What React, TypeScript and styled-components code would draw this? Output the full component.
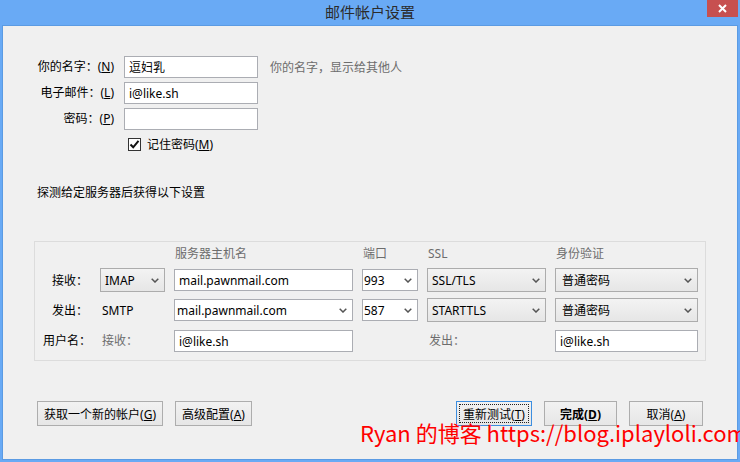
import React from 'react';
import styled, { createGlobalStyle } from 'styled-components';

const Global = createGlobalStyle`
  html, body { margin: 0; padding: 0; }
  body {
    width: 740px; height: 462px; overflow: hidden;
    font-family: "Noto Sans", "Noto Sans CJK SC", sans-serif;
    font-size: 12px; color: #000;
  }
`;

const Window = styled.div`
  width: 740px; height: 462px; box-sizing: border-box;
  background: #69aaf5;
  padding: 0 2px 2px 2px;
  display: flex; flex-direction: column;
  position: relative; overflow: hidden;
`;

const TitleBar = styled.div`
  height: 25px; flex: none;
  display: grid; grid-template-columns: 1fr auto 1fr; align-items: start;
`;

const Title = styled.div`
  grid-column: 2;
  font-family: "Noto Sans CJK SC", sans-serif;
  font-size: 15px; line-height: 24px; color: #2b2b2b;
`;

const CloseBtn = styled.div`
  grid-column: 3; justify-self: end;
  width: 31px; height: 17px; background: #c75050;
  display: flex; align-items: center; justify-content: center;
`;

const Content = styled.div`
  flex: 1; background: #f0f0f0; border: 1px solid #5b9be3;
  display: flex; flex-direction: column;
`;

const Form = styled.div`
  margin: 30px 0 0 27px;
  display: grid;
  grid-template-columns: 84px 134px auto;
  grid-template-rows: 22px 22px 22px 20px;
  row-gap: 4px; column-gap: 10px;
  align-items: center;
`;

const Label = styled.div`
  text-align: right; white-space: nowrap; line-height: 22px;
`;

const Hint = styled.div`
  color: #6d6d6d; margin-left: 2px; white-space: nowrap;
`;

const TextBox = styled.input`
  height: 22px; box-sizing: border-box; width: 100%; min-width: 0;
  border: 1px solid #abadb3; background: #fff;
  padding: 0 4px; margin: 0;
  font: inherit; color: #000; outline: none;
`;

const CheckRow = styled.label`
  grid-column: 2 / 4;
  display: flex; align-items: center; gap: 6px; padding-left: 4px;
  white-space: nowrap;
`;

const CheckBox = styled.span`
  width: 13px; height: 13px; box-sizing: border-box;
  border: 1px solid #333; background: #fff;
  display: flex; align-items: center; justify-content: center;
`;

const Probe = styled.div`
  margin: 31px 0 0 34px; line-height: 16px;
`;

const Group = styled.div`
  margin: 40px 31px 0 31px; height: 120px; box-sizing: border-box;
  border: 1px solid #dcdcdc;
  padding: 4px 7px 0 8px;
  display: grid;
  grid-template-columns: 48px 65px 179px 56px 119px 143px;
  grid-template-rows: 16px 24px 24px 24px;
  column-gap: 9px; row-gap: 6px;
  align-items: center;
`;

const Head = styled.div`
  color: #6d6d6d; line-height: 16px; white-space: nowrap;
  padding-left: 1px;
`;

const RowLabel = styled.div`
  text-align: right; white-space: nowrap; padding-right: 3px;
`;

const Plain = styled.div<{ $muted?: boolean }>`
  color: ${p => (p.$muted ? '#6d6d6d' : '#000')};
  padding-left: 2px; white-space: nowrap;
`;

const Drop = styled.div<{ $field?: boolean; $pad?: number }>`
  height: ${p => (p.$field ? 22 : 24)}px; box-sizing: border-box;
  border: 1px solid ${p => (p.$field ? '#abadb3' : '#acacac')};
  background: ${p => (p.$field ? '#fff' : 'linear-gradient(#f3f3f3, #e6e6e6)')};
  display: flex; align-items: center; justify-content: space-between;
  padding: 0 5px 0 ${p => p.$pad ?? 4}px;
  white-space: nowrap;
`;

const EndBox = styled(TextBox)`
  align-self: end;
`;

const Buttons = styled.div`
  margin: 40px 34px 0 34px;
  display: flex; align-items: center; justify-content: space-between;
`;

const BtnGroup = styled.div`
  display: flex; gap: 12px;
`;

const Btn = styled.button<{ $w: number; $bold?: boolean; $focus?: boolean }>`
  width: ${p => p.$w}px; height: 25px; box-sizing: border-box; margin: 0; padding: 0;
  border: 1px solid ${p => (p.$focus ? '#3c8ee0' : '#adadad')};
  background: linear-gradient(#f2f2f2, #e6e6e6);
  font: inherit; font-weight: ${p => (p.$bold ? 700 : 400)}; color: #000;
  position: relative; white-space: nowrap;
  &::after {
    content: '';
    display: ${p => (p.$focus ? 'block' : 'none')};
    position: absolute; inset: 2px;
    border: 1px dotted #222;
  }
`;

const Watermark = styled.div`
  position: absolute; left: 360px; top: 421px;
  font-family: "Noto Sans CJK SC", sans-serif;
  font-size: 22px; line-height: 22px; color: #ff0000;
  white-space: nowrap; pointer-events: none;
`;

const Arrow = () => (
  <svg width="8" height="5" viewBox="0 0 8 5">
    <path d="M0.7 0.7 L4 4 L7.3 0.7" stroke="#555" strokeWidth="1.5" fill="none" />
  </svg>
);

const Check = () => (
  <svg width="11" height="11" viewBox="0 0 11 11">
    <path d="M1.5 5.5 L4.2 8.3 L9.5 1.8" stroke="#111" strokeWidth="2" fill="none" />
  </svg>
);

export default function App() {
  return (
    <>
      <Global />
      <Window>
        <TitleBar>
          <Title>邮件帐户设置</Title>
          <CloseBtn>
            <svg width="9" height="9" viewBox="0 0 9 9">
              <path d="M1 1 L8 8 M8 1 L1 8" stroke="#fff" strokeWidth="2" />
            </svg>
          </CloseBtn>
        </TitleBar>
        <Content>
          <Form>
            <Label>你的名字：(<u>N</u>)</Label>
            <TextBox defaultValue="逗妇乳" />
            <Hint>你的名字，显示给其他人</Hint>
            <Label>电子邮件：(<u>L</u>)</Label>
            <TextBox defaultValue="i@like.sh" />
            <span />
            <Label>密码：(<u>P</u>)</Label>
            <TextBox type="password" defaultValue="" />
            <span />
            <span />
            <CheckRow>
              <CheckBox><Check /></CheckBox>
              <span>记住密码(<u>M</u>)</span>
            </CheckRow>
          </Form>

          <Probe>探测给定服务器后获得以下设置</Probe>

          <Group>
            <span />
            <span />
            <Head>服务器主机名</Head>
            <Head>端口</Head>
            <Head>SSL</Head>
            <Head>身份验证</Head>

            <RowLabel>接收：</RowLabel>
            <Drop>IMAP<Arrow /></Drop>
            <TextBox defaultValue="mail.pawnmail.com" />
            <Drop $field $pad={1}>993<Arrow /></Drop>
            <Drop>SSL/TLS<Arrow /></Drop>
            <Drop $pad={6}>普通密码<Arrow /></Drop>

            <RowLabel>发出：</RowLabel>
            <Plain>SMTP</Plain>
            <Drop $field $pad={2}>mail.pawnmail.com<Arrow /></Drop>
            <Drop $field $pad={1}>587<Arrow /></Drop>
            <Drop>STARTTLS<Arrow /></Drop>
            <Drop $pad={6}>普通密码<Arrow /></Drop>

            <RowLabel>用户名：</RowLabel>
            <Plain $muted>接收：</Plain>
            <EndBox defaultValue="i@like.sh" />
            <span />
            <Plain $muted>发出：</Plain>
            <EndBox defaultValue="i@like.sh" />
          </Group>

          <Buttons>
            <BtnGroup>
              <Btn $w={126}>获取一个新的帐户(<u>G</u>)</Btn>
              <Btn $w={77}>高级配置(<u>A</u>)</Btn>
            </BtnGroup>
            <BtnGroup>
              <Btn $w={76} $focus>重新测试(<u>T</u>)</Btn>
              <Btn $w={73} $bold>完成(<u>D</u>)</Btn>
              <Btn $w={74}>取消(<u>A</u>)</Btn>
            </BtnGroup>
          </Buttons>
        </Content>
        <Watermark>Ryan 的博客 https://blog.iplayloli.com</Watermark>
      </Window>
    </>
  );
}
